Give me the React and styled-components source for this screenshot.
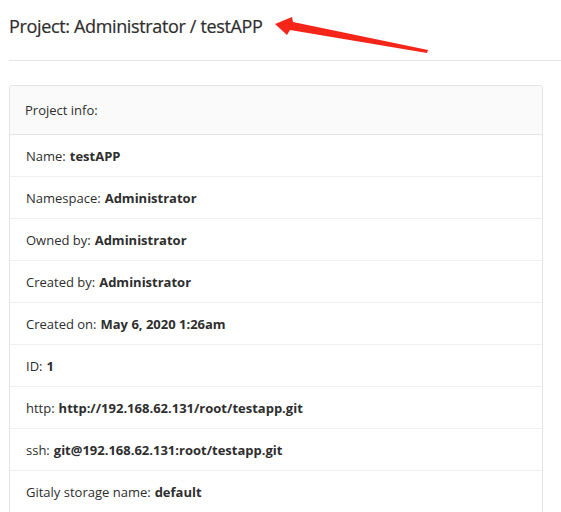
import React from "react";
import styled, { createGlobalStyle } from "styled-components";

const Global = createGlobalStyle`
  html, body { margin: 0; padding: 0; background: #fff; overflow: hidden; }
  body { font-family: "Open Sans", "Noto Sans", sans-serif; color: #2e2e2e; }
`;

const Page = styled.div`
  position: relative;
  padding-left: 9px;
`;

const TitleBar = styled.div`
  height: 61px;
  box-sizing: border-box;
  border-bottom: 1px solid #e5e5e5;
  display: flex;
  align-items: flex-start;
`;

const Title = styled.h3`
  margin: 0;
  padding-top: 14px;
  font-size: 18px;
  font-weight: 400;
  letter-spacing: -0.35px;
  line-height: 24px;
  color: #2e2e2e;
  -webkit-text-stroke: 0.2px #2e2e2e;
`;

const Card = styled.div`
  margin-top: 24px;
  width: 534px;
  box-sizing: border-box;
  border: 1px solid #e5e5e5;
  border-radius: 3px;
  overflow: hidden;
`;

const CardHeader = styled.div`
  height: 49px;
  box-sizing: border-box;
  background: #fafafa;
  border-bottom: 1px solid #e5e5e5;
  display: flex;
  align-items: center;
  padding-left: 15px;
  font-size: 13px;
`;

const List = styled.ul`
  list-style: none;
  margin: 0;
  padding: 0;
`;

const Row = styled.li`
  height: 42px;
  box-sizing: border-box;
  border-bottom: 1px solid #f0f0f0;
  display: flex;
  align-items: center;
  padding-left: 16px;
  font-size: 13px;
`;

const Value = styled.strong`
  font-weight: 700;
  margin-left: 4px;
`;

const Arrow = styled.svg`
  position: absolute;
  left: 0;
  top: 0;
  pointer-events: none;
`;

const rows = [
  ["Name:", "testAPP"],
  ["Namespace:", "Administrator"],
  ["Owned by:", "Administrator"],
  ["Created by:", "Administrator"],
  ["Created on:", "May 6, 2020 1:26am"],
  ["ID:", "1"],
  ["http:", "http://192.168.62.131/root/testapp.git"],
  ["ssh:", "git@192.168.62.131:root/testapp.git"],
  ["Gitaly storage name:", "default"],
];

export default function App() {
  return (
    <>
      <Global />
      <Page>
        <TitleBar>
          <Title>Project: Administrator / testAPP</Title>
        </TitleBar>
        <Card>
          <CardHeader>Project info:</CardHeader>
          <List>
            {rows.map(([k, v]) => (
              <Row key={k}>
                {k}
                <Value>{v}</Value>
              </Row>
            ))}
          </List>
        </Card>
        <Arrow width="561" height="80" viewBox="0 0 561 80">
          <polygon
            points="275,24 292,17 293,22 428,50 427,53 290,30 287,35"
            fill="#f5251a"
          />
        </Arrow>
      </Page>
    </>
  );
}
